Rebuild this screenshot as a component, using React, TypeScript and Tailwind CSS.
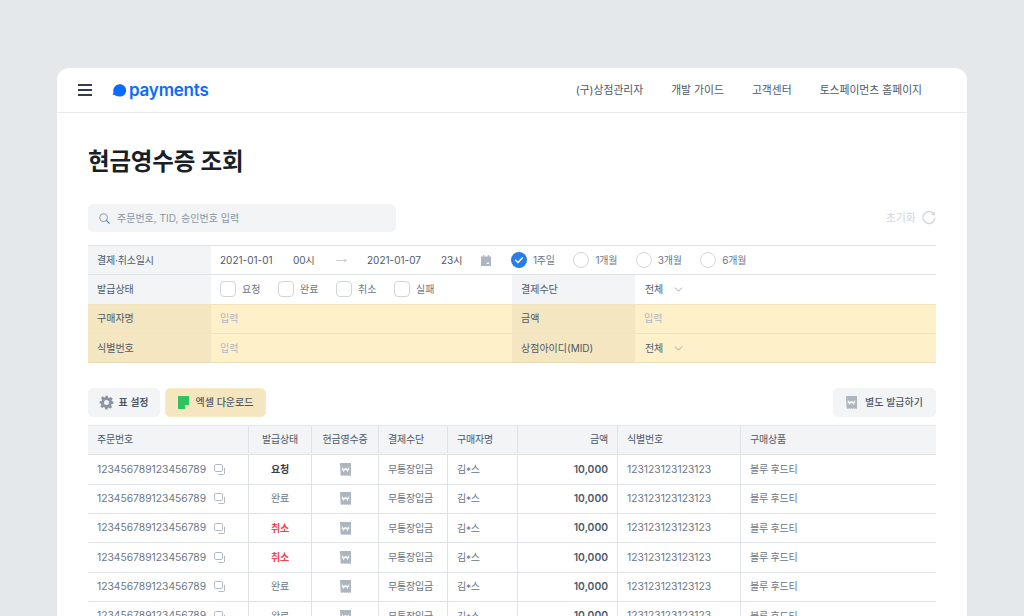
import { ChevronDown, MoveRight } from "lucide-react";

const font = "font-['Inter','Noto_Sans_CJK_KR',sans-serif]";

const navItems = ["(구)상점관리자", "개발 가이드", "고객센터", "토스페이먼츠 홈페이지"];
const statuses = ["요청", "완료", "취소", "실패"];
const periods = ["1주일", "1개월", "3개월", "6개월"];
const rows = ["요청", "완료", "취소", "취소", "완료", "완료"];
const grid = "grid grid-cols-[161px_63px_67px_69px_70px_100px_123px_1fr]";

function WonIcon({ className = "" }: { className?: string }) {
  return (
    <svg viewBox="0 0 11 13" className={className}>
      <path
        d="M0 0h11v12.200l-.9.800-.9-.8-.9.800-.9-.8-.9.800-.9-.8-.9.800-.9-.8-.9.800-.9-.8-.9.800-.5-.8z"
        fill="#adb5bf"
      />
      <path
        d="M2.200 4.500l1.300 4 2-3.600 2 3.600 1.300-4M1.700 6.300h7.600"
        fill="none"
        stroke="#fff"
        strokeWidth="1"
      />
    </svg>
  );
}

function CopyIcon() {
  return (
    <svg viewBox="0 0 11 11" className="h-[11px] w-[11px] shrink-0" fill="none" stroke="#b0b8c1" strokeWidth="1">
      <rect x="0.5" y="0.5" width="8" height="7" rx="1.200" />
      <path d="M10.500 3.800v5.700a1 1 0 0 1-1 1H4.500" />
    </svg>
  );
}

function Check({ label }: { label: string }) {
  return (
    <div className="flex w-[58px] items-center gap-[6px]">
      <span className="h-[16px] w-[16px] rounded-[4px] border-[1.5px] border-[#d1d6db] bg-white" />
      <span className="text-[10px] text-[#6b7684]">{label}</span>
    </div>
  );
}

function Radio({ label, on }: { label: string; on?: boolean }) {
  return (
    <div className="flex items-center gap-[6px]">
      {on ? (
        <svg viewBox="0 0 16 16" className="h-4 w-4">
          <circle cx="8" cy="8" r="8" fill="#2a7de9" />
          <path d="M4.600 8.200l2.400 2.300 4.300-4.600" fill="none" stroke="#fff" strokeWidth="1.500" strokeLinecap="round" />
        </svg>
      ) : (
        <span className="h-4 w-4 rounded-full border-[1.5px] border-[#d1d6db] bg-white" />
      )}
      <span className="text-[10px] tracking-[-0.2px] text-[#6b7684]">{label}</span>
    </div>
  );
}

function SelectAll() {
  return (
    <div className="flex items-center gap-[9px] pl-[10px] text-[10px] tracking-[-0.2px] text-[#4e5968]">
      전체
      <ChevronDown className="h-[13px] w-[13px] text-[#8b95a1]" strokeWidth={1.5} />
    </div>
  );
}

function Cell({ children, className = "" }: { children?: React.ReactNode; className?: string }) {
  return <div className={`flex items-center border-r border-[#dfe3e8] px-[9px] last:border-r-0 ${className}`}>{children}</div>;
}

export default function App() {
  return (
    <div className={`${font} h-[616px] overflow-hidden bg-[#e5e8eb] px-[57px] pt-[68px]`}>
      <div className="h-[600px] rounded-t-[12px] bg-white">
        <header className="flex h-[45px] items-center border-b border-[#e9ebee] pl-[21px] pr-[45px]">
          <svg viewBox="0 0 14 12" className="h-3 w-[14px]" fill="none" stroke="#333d4b" strokeWidth="1.800">
            <path d="M0 1h14M0 6h14M0 11h14" />
          </svg>
          <div className="ml-[20px] flex items-center gap-[2px]">
            <svg viewBox="0 0 15 13" className="h-[13px] w-[15px]">
              <path d="M6.500 .4c4-.6 7.600 1.800 7.600 6 0 3.700-3 6.100-6.600 6.100-2 0-4-.6-5.100-1.700-.6.200-1.300.300-2 .200.500-.500.900-1.200 1-2.100C.7 4.400 2.900 1 6.500 .4z" fill="#0a6cff" />
            </svg>
            <span className="text-[17px] font-semibold leading-none tracking-[-0.2px] text-[#0a6cff]">payments</span>
          </div>
          <nav className="ml-auto flex gap-[28px] pt-[2px] text-[10.800px] text-[#4e5968]">
            {navItems.map((item) => (
              <span key={item}>{item}</span>
            ))}
          </nav>
        </header>

        <div className="px-[31px]">
          <h1 className="mt-[31px] text-[23.500px] font-bold leading-[36px] tracking-[-0.2px] text-[#191f28]">현금영수증 조회</h1>

          <div className="mt-[24px] flex items-center justify-between">
            <div className="flex h-[28px] w-[308px] items-center gap-[7px] rounded-[5px] bg-[#f2f4f6] pl-[11px]">
              <svg viewBox="0 0 12 12" className="h-[11px] w-[11px]" fill="none" strokeWidth="1.200">
                <circle cx="5" cy="5" r="4.200" stroke="#9aa4b0" />
                <path d="M8 8l3.500 3.500" stroke="#2a7de9" />
              </svg>
              <span className="text-[10px] text-[#8b95a1]">주문번호, TID, 승인번호 입력</span>
            </div>
            <div className="flex items-center gap-[6px] text-[11px] text-[#d1d6db]">
              초기화
              <svg viewBox="0 0 14 14" className="h-[14px] w-[14px]" fill="none" stroke="#d1d6db" strokeWidth="1.300">
                <path d="M12 3.200A6 6 0 1 0 13 7M12.300 .9v2.800H9.500" />
              </svg>
            </div>
          </div>

          <div className="mt-[13px] border-t border-[#dfe3e8] text-[10px]">
            <div className="flex h-[29.330px] border-b border-[#dfe3e8]">
              <div className="flex w-[123px] items-center bg-[#f2f4f6] px-[9px] tracking-[-0.2px] text-[#4e5968]">결제·취소일시</div>
              <div className="flex items-center pl-[9px] text-[#4e5968]">
                <span className="w-[73px]">2021-01-01</span>
                <span className="w-[43px]">00시</span>
                <MoveRight className="h-[11px] w-[11px] text-[#adb5bf]" strokeWidth={1.5} />
                <span className="ml-[20px] w-[74px]">2021-01-07</span>
                <span className="w-[40px]">23시</span>
                <svg viewBox="0 0 10 11" className="h-[11px] w-[10px]">
                  <path d="M0 1.500h2V0h1.200v1.500h3.600V0H8v1.500h2V11H0z" fill="#adb5bf" />
                  <rect x="5.500" y="7.500" width="2.500" height="1.500" fill="#fff" />
                </svg>
              </div>
              <div className="ml-[20px] flex gap-[18.500px]">
                {periods.map((p, i) => (
                  <Radio key={p} label={p} on={i === 0} />
                ))}
              </div>
            </div>

            <div className="grid h-[29.330px] grid-cols-[123px_301px_123px_1fr] border-b border-[#f0e3bd]">
              <div className="flex items-center bg-[#f2f4f6] px-[9px] text-[#4e5968]">발급상태</div>
              <div className="flex items-center pl-[9px]">
                {statuses.map((s) => (
                  <Check key={s} label={s} />
                ))}
              </div>
              <div className="flex items-center bg-[#f2f4f6] px-[9px] text-[#4e5968]">결제수단</div>
              <SelectAll />
            </div>

            <div className="grid h-[29.330px] grid-cols-[123px_301px_123px_1fr] border-b border-[#f0e3bd] bg-[#fef1c9]">
              <div className="flex items-center bg-[#f3e6c0] px-[9px] text-[#4e5968]">구매자명</div>
              <div className="flex items-center px-[9px] text-[#b0b8c1]">입력</div>
              <div className="flex items-center bg-[#f3e6c0] px-[9px] text-[#4e5968]">금액</div>
              <div className="flex items-center px-[9px] text-[#b0b8c1]">입력</div>
            </div>

            <div className="grid h-[29.330px] grid-cols-[123px_301px_123px_1fr] border-b border-[#e9dcb6] bg-[#fef1c9]">
              <div className="flex items-center bg-[#f3e6c0] px-[9px] text-[#4e5968]">식별번호</div>
              <div className="flex items-center px-[9px] text-[#b0b8c1]">입력</div>
              <div className="flex items-center bg-[#f3e6c0] px-[9px] text-[#4e5968]">상점아이디(MID)</div>
              <SelectAll />
            </div>
          </div>

          <div className="mt-[25px] flex items-center gap-[5px]">
            <button className="flex h-[29px] w-[72px] items-center justify-center gap-[4px] rounded-[5px] bg-[#f2f4f6] text-[10px] font-semibold text-[#4e5968]">
              <svg viewBox="0 0 24 24" className="h-[15px] w-[15px]" fill="#8b95a1" fillRule="evenodd">
                <path d="M10 1h4l.6 3.100 1.800.8 2.700-1.800 2.800 2.800-1.800 2.700.8 1.800L23 10v4l-3.100.6-.8 1.800 1.800 2.700-2.800 2.800-2.700-1.800-1.800.8L14 23h-4l-.6-3.100-1.800-.8-2.700 1.800-2.800-2.800 1.800-2.700-.8-1.800L1 14v-4l3.100-.6.8-1.800-1.800-2.700 2.800-2.800 2.700 1.800 1.800-.8zM12 8a4 4 0 1 0 0 8 4 4 0 0 0 0-8z" />
              </svg>
              표 설정
            </button>
            <button className="flex h-[29px] w-[101px] items-center justify-center gap-[7px] rounded-[5px] border border-[#f8ebc4] bg-[#f5e6bf] text-[10px] font-medium text-[#4e5968]">
              <svg viewBox="0 0 11 13" className="h-[13px] w-[11px]">
                <path d="M0 0h11v9l-4 4H0z" fill="#2fc25f" />
                <path d="M11 9l-4 4V9z" fill="#f5e6bf" />
              </svg>
              엑셀 다운로드
            </button>
            <button className="ml-auto flex h-[29px] w-[103px] items-center justify-center gap-[8px] rounded-[5px] bg-[#f2f4f6] text-[10px] font-medium text-[#4e5968]">
              <WonIcon className="h-[13px] w-[11px]" />
              별도 발급하기
            </button>
          </div>

          <div className="mt-[8px] border-t border-[#e5e8eb] text-[10px]">
            <div className={`${grid} h-[29px] border-b border-[#dfe3e8] bg-[#f2f4f6] pb-[1px] tracking-[-0.2px] text-[#4e5968]`}>
              <Cell>주문번호</Cell>
              <Cell className="justify-center">발급상태</Cell>
              <Cell className="justify-center">현금영수증</Cell>
              <Cell>결제수단</Cell>
              <Cell>구매자명</Cell>
              <Cell className="justify-end">금액</Cell>
              <Cell>식별번호</Cell>
              <Cell>구매상품</Cell>
            </div>
            {rows.map((status, i) => (
              <div key={i} className={`${grid} h-[29.330px] border-b border-[#dfe3e8] tracking-[-0.2px] text-[#6b7684]`}>
                <Cell className="gap-[8px] text-[10.300px] tracking-normal">
                  123456789123456789
                  <CopyIcon />
                </Cell>
                <Cell
                  className={`justify-center ${
                    status === "요청"
                      ? "font-semibold text-[#333d4b]"
                      : status === "취소"
                        ? "font-semibold text-[#f04452]"
                        : ""
                  }`}
                >
                  {status}
                </Cell>
                <Cell className="justify-center">
                  <WonIcon className="h-[13px] w-[11px]" />
                </Cell>
                <Cell>무통장입금</Cell>
                <Cell>
                  김<span className="inline-block translate-y-[2px]">*</span>스
                </Cell>
                <Cell className="justify-end text-[10.300px] font-semibold tracking-normal text-[#4e5968]">10,000</Cell>
                <Cell className="text-[10.300px] tracking-normal">123123123123123</Cell>
                <Cell>블루 후드티</Cell>
              </div>
            ))}
          </div>
        </div>
      </div>
    </div>
  );
}
